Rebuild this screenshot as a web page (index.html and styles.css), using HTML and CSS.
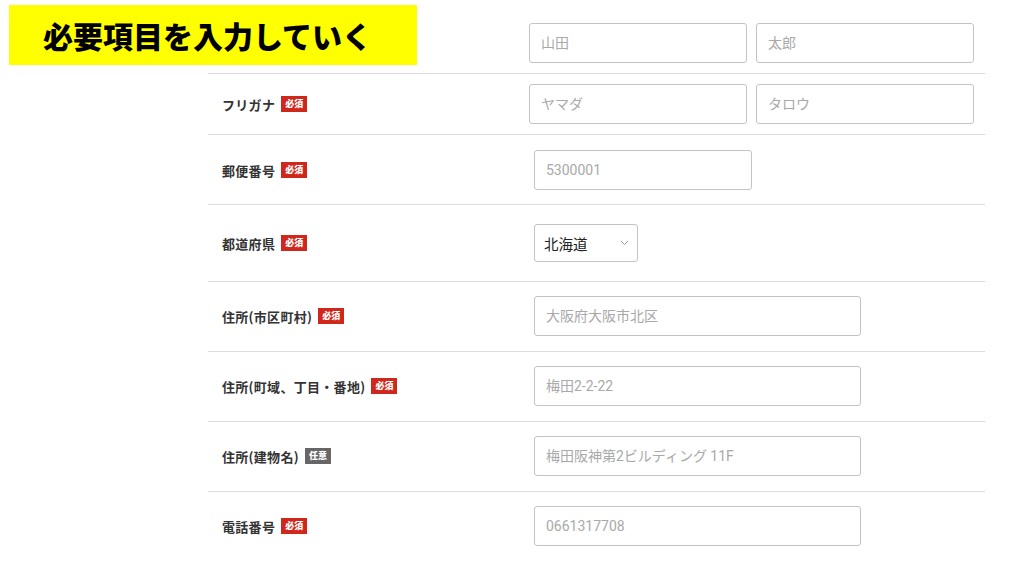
FILE: index.html
```html
<!DOCTYPE html>
<html lang="ja">
<head>
<meta charset="utf-8">
<title>必要項目を入力していく</title>
<link rel="stylesheet" href="styles.css">
</head>
<body>
<div class="page">
  <div class="banner">必要項目を入力していく</div>
  <form class="form">
    <div class="row row-name">
      <div class="label"></div>
      <div class="field pair">
        <input class="input half" type="text" placeholder="山田">
        <input class="input half" type="text" placeholder="太郎">
      </div>
    </div>
    <div class="row row-name">
      <div class="label">フリガナ<span class="badge">必須</span></div>
      <div class="field pair">
        <input class="input half" type="text" placeholder="ヤマダ">
        <input class="input half" type="text" placeholder="タロウ">
      </div>
    </div>
    <div class="row row-std row-zip">
      <div class="label">郵便番号<span class="badge">必須</span></div>
      <div class="field">
        <input class="input half" type="text" placeholder="5300001">
      </div>
    </div>
    <div class="row row-std row-pref">
      <div class="label">都道府県<span class="badge">必須</span></div>
      <div class="field">
        <div class="select">
          <span class="select-value">北海道</span>
          <svg class="chevron" width="9" height="6" viewBox="0 0 9 6"><path d="M1 1 L4.5 4.5 L8 1" fill="none" stroke="#999" stroke-width="1"/></svg>
        </div>
      </div>
    </div>
    <div class="row row-std">
      <div class="label">住所(市区町村)<span class="badge">必須</span></div>
      <div class="field">
        <input class="input wide" type="text" placeholder="大阪府大阪市北区">
      </div>
    </div>
    <div class="row row-std">
      <div class="label">住所(町域、丁目・番地)<span class="badge">必須</span></div>
      <div class="field">
        <input class="input wide" type="text" placeholder="梅田2-2-22">
      </div>
    </div>
    <div class="row row-std">
      <div class="label">住所(建物名)<span class="badge badge-optional">任意</span></div>
      <div class="field">
        <input class="input wide" type="text" placeholder="梅田阪神第2ビルディング 11F">
      </div>
    </div>
    <div class="row row-std row-last">
      <div class="label">電話番号<span class="badge">必須</span></div>
      <div class="field">
        <input class="input wide" type="text" placeholder="0661317708">
      </div>
    </div>
  </form>
</div>
</body>
</html>
```
FILE: styles.css
```css
* { box-sizing: border-box; }
html, body {
  margin: 0;
  padding: 0;
  background: #fff;
  width: 1024px;
  height: 576px;
  overflow: hidden;
}
body {
  font-family: Roboto, "Noto Sans CJK JP", sans-serif;
  color: #333;
}
.page {
  position: relative;
  width: 1024px;
  height: 576px;
}
.banner {
  position: absolute;
  left: 9px;
  top: 5px;
  width: 408px;
  height: 60px;
  background: #ffff00;
  color: #000;
  font-family: "Noto Sans CJK JP", sans-serif;
  font-weight: 900;
  font-size: 30px;
  line-height: 60px;
  padding-left: 34px;
  z-index: 2;
}
.form {
  margin: 0 0 0 208px;
  width: 777px;
  padding-top: 13px;
}
.row {
  display: grid;
  align-items: center;
  border-bottom: 1px solid #dcdcdc;
}
.row-name {
  grid-template-columns: 321px 1fr;
  padding: 10px 0;
}
.row-std {
  grid-template-columns: 326px 1fr;
  padding: 14px 0 15px;
}
.row-zip { padding: 15px 0 14px; }
.row-pref { padding: 19px 0 19px; }
.row-last { border-bottom: none; }
.label {
  display: flex;
  align-items: center;
  padding-left: 14px;
  font-family: "Noto Sans CJK JP", sans-serif;
  font-weight: 700;
  font-size: 13px;
  letter-spacing: 0.3px;
  color: #333;
}
.badge {
  display: inline-block;
  margin-left: 6px;
  width: 26px;
  height: 16px;
  line-height: 16px;
  text-align: center;
  letter-spacing: 0;
  background: #d0271d;
  color: #fff;
  font-size: 9px;
  font-weight: 900;
}
.badge-optional { background: #666; }
.field {
  display: flex;
  align-items: center;
}
.pair { gap: 9px; }
.input {
  height: 40px;
  border: 1px solid #c4c4c4;
  border-radius: 3px;
  background: #fff;
  padding: 0 11px;
  font-family: Roboto, "Noto Sans CJK JP", sans-serif;
  font-size: 14px;
  color: #333;
  outline: none;
}
.input::placeholder { color: #a9a9a9; }
.half { width: 218px; }
.wide { width: 327px; }
.select {
  display: flex;
  align-items: center;
  justify-content: space-between;
  width: 104px;
  height: 38px;
  border: 1px solid #c4c4c4;
  border-radius: 3px;
  padding: 0 8px 0 9px;
}
.select-value {
  font-family: "Noto Sans CJK JP", sans-serif;
  font-size: 14.5px;
  color: #222;
}
.chevron { display: block; }
```
